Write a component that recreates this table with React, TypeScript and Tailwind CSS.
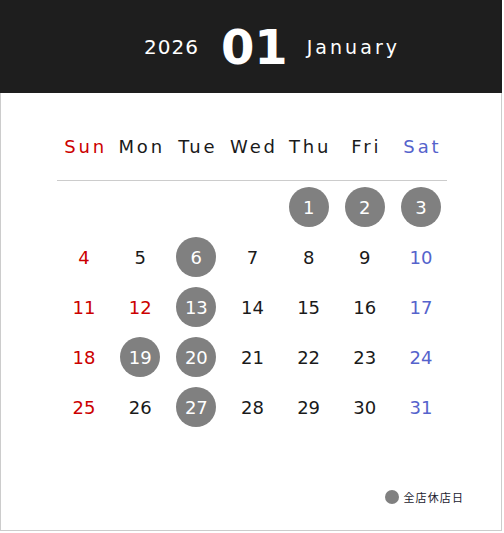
const weekdays = [
  { label: 'Sun', color: 'text-[#cc0000]' },
  { label: 'Mon', color: 'text-[#1a1a1a]' },
  { label: 'Tue', color: 'text-[#1a1a1a]' },
  { label: 'Wed', color: 'text-[#1a1a1a]' },
  { label: 'Thu', color: 'text-[#1a1a1a]' },
  { label: 'Fri', color: 'text-[#1a1a1a]' },
  { label: 'Sat', color: 'text-[#5563cc]' },
];

// January 2026 starts on Thursday
const holidays = [1, 2, 3, 6, 13, 19, 20, 27];
const redDays = [12];

const cells: (number | null)[] = [null, null, null, null, ...Array.from({ length: 31 }, (_, i) => i + 1)];

function dayColor(day: number, col: number) {
  if (holidays.includes(day)) return 'text-white';
  if (col === 0 || redDays.includes(day)) return 'text-[#cc0000]';
  if (col === 6) return 'text-[#5563cc]';
  return 'text-[#1a1a1a]';
}

export default function App() {
  return (
    <div className="w-[502px] h-[531px] flex flex-col bg-white font-['DejaVu_Sans',sans-serif]">
      <header className="h-[93px] shrink-0 bg-[#1e1e1e] flex items-center pl-[144px] text-white">
        <span className="text-[20px] tracking-[0.05em] mr-[22px] mt-[1px]">2026</span>
        <span className="text-[48px] font-bold leading-none mr-[19px]">01</span>
        <span className="text-[19px] tracking-[0.16em] mt-[1px]">January</span>
      </header>

      <div className="flex-1 flex flex-col border-x border-b border-[#cccccc]">
        <div className="w-[393px] ml-[55px] mt-[33px]">
          <div className="grid grid-cols-7 h-[40px] items-center">
            {weekdays.map((w) => (
              <div key={w.label} className={`text-center text-[18px] tracking-[0.16em] pl-[3px] ${w.color}`}>
                {w.label}
              </div>
            ))}
          </div>
          <div className="h-px w-[390px] ml-[1px] bg-[#cccccc] mt-[14px]" />
          <div className="grid grid-cols-7 pt-[1px]">
            {cells.map((day, i) =>
              day === null ? (
                <div key={i} className="h-[50px]" />
              ) : (
                <div key={i} className="h-[50px] flex items-center justify-center">
                  <span
                    className={`w-[40px] h-[40px] rounded-full flex items-center justify-center text-[18px] ${
                      holidays.includes(day) ? 'bg-[#808080]' : ''
                    } ${dayColor(day, i % 7)}`}
                  >
                    {day}
                  </span>
                </div>
              ),
            )}
          </div>
        </div>

        <div className="mt-auto mb-[25px] mr-[37px] flex items-center justify-end gap-[5px]">
          <span className="w-[14px] h-[14px] rounded-full bg-[#808080]" />
          <span className="text-[11px] text-[#1a1a2e] tracking-[0.1em] font-['Noto_Sans_CJK_JP',sans-serif]">
            全店休店日
          </span>
        </div>
      </div>
    </div>
  );
}
